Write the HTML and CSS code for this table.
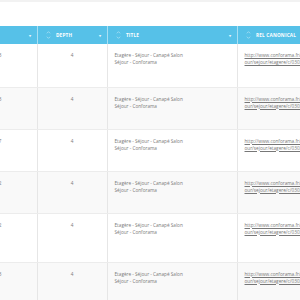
FILE: index.html
```html
<!DOCTYPE html>
<html lang="fr">
<head>
  <meta charset="UTF-8">
  <title>Audit SEO</title>
  <link rel="stylesheet" href="styles.css">
</head>
<body>
  <div class="topbar"></div>
  <div class="table-wrap">
    <table class="audit-table">
      <colgroup>
        <col class="col-id">
        <col class="col-depth">
        <col class="col-title">
        <col class="col-canonical">
      </colgroup>
      <thead>
        <tr>
          <th><span class="caret">&#9662;</span></th>
          <th>
            <span class="sort"><svg viewBox="0 0 6 12" width="5" height="10"><path d="M1 4 L3 2 L5 4 M1 8 L3 10 L5 8" fill="none" stroke="#bfe8f7" stroke-width="0.8"/></svg></span>
            <span class="label">Depth</span>
            <span class="caret">&#9662;</span>
          </th>
          <th>
            <span class="sort"><svg viewBox="0 0 6 12" width="5" height="10"><path d="M1 4 L3 2 L5 4 M1 8 L3 10 L5 8" fill="none" stroke="#bfe8f7" stroke-width="0.8"/></svg></span>
            <span class="label">Title</span>
            <span class="caret">&#9662;</span>
          </th>
          <th>
            <span class="sort"><svg viewBox="0 0 6 12" width="5" height="10"><path d="M1 4 L3 2 L5 4 M1 8 L3 10 L5 8" fill="none" stroke="#bfe8f7" stroke-width="0.8"/></svg></span>
            <span class="label">Rel canonical</span>
          </th>
        </tr>
      </thead>
      <tbody>
        <tr>
          <td class="num">3</td>
          <td class="depth">4</td>
          <td class="title">Etagère - Séjour - Canapé Salon Séjour - Conforama</td>
          <td><a href="#">http://www.conforama.fr/canape-salon-sejour/sejour/etagere/c/0303</a></td>
        </tr>
        <tr>
          <td class="num">3</td>
          <td class="depth">4</td>
          <td class="title">Etagère - Séjour - Canapé Salon Séjour - Conforama</td>
          <td><a href="#">http://www.conforama.fr/canape-salon-sejour/sejour/etagere/c/0303</a></td>
        </tr>
        <tr>
          <td class="num">7</td>
          <td class="depth">4</td>
          <td class="title">Etagère - Séjour - Canapé Salon Séjour - Conforama</td>
          <td><a href="#">http://www.conforama.fr/canape-salon-sejour/sejour/etagere/c/0303</a></td>
        </tr>
        <tr>
          <td class="num">2</td>
          <td class="depth">4</td>
          <td class="title">Etagère - Séjour - Canapé Salon Séjour - Conforama</td>
          <td><a href="#">http://www.conforama.fr/canape-salon-sejour/sejour/etagere/c/0303</a></td>
        </tr>
        <tr class="tall">
          <td class="num">2</td>
          <td class="depth">4</td>
          <td class="title">Etagère - Séjour - Canapé Salon Séjour - Conforama</td>
          <td><a href="#">http://www.conforama.fr/canape-salon-sejour/sejour/etagere/c/0303</a></td>
        </tr>
        <tr>
          <td class="num">3</td>
          <td class="depth">4</td>
          <td class="title">Etagère - Séjour - Canapé Salon Séjour - Conforama</td>
          <td><a href="#">http://www.conforama.fr/canape-salon-sejour/sejour/etagere/c/0303</a></td>
        </tr>
      </tbody>
    </table>
  </div>
</body>
</html>
```

FILE: styles.css
```css
body {
  margin: 0;
  background: #fff;
  font-family: 'Open Sans', 'Liberation Sans', sans-serif;
  color: #7a7a7a;
  overflow: hidden;
}
.topbar {
  height: 2px;
  background: #f2f2f2;
}
.table-wrap {
  margin-top: 24px;
  margin-left: -70px;
}
.audit-table {
  border-collapse: collapse;
  table-layout: fixed;
  width: 415px;
  font-size: 4.7px;
  line-height: 7px;
}
.col-id { width: 107px; }
.col-depth { width: 70px; }
.col-title { width: 130px; }
.col-canonical { width: 108px; }
.audit-table th {
  background: #56c1e8;
  color: #fff;
  height: 18px;
  padding: 0 6px 0 8px;
  text-align: left;
  font-weight: 700;
  text-transform: uppercase;
  letter-spacing: 0.2px;
  border-left: 1px solid #a8dff3;
  position: relative;
}
.audit-table th:first-child {
  border-left: none;
}
.sort {
  display: inline-block;
  vertical-align: middle;
  width: 5px;
  margin-right: 4px;
}
.sort svg {
  display: block;
}
.label {
  vertical-align: middle;
}
.caret {
  position: absolute;
  right: 5px;
  top: 6px;
  font-size: 4px;
  color: #e6f6fc;
}
.audit-table td {
  height: 42px;
  padding: 8px 7px 0 7px;
  vertical-align: top;
  border-left: 1px solid #e6e6e6;
  border-bottom: 1px solid #ececec;
  box-sizing: border-box;
}
.audit-table td:first-child {
  border-left: none;
}
.audit-table tbody tr:nth-child(even) td {
  background: #f9f9f9;
}
.audit-table tbody tr:first-child td {
  height: 43px;
}
.audit-table tr.tall td {
  height: 49px;
}
.audit-table td.title {
  padding-right: 42px;
}
.num {
  text-align: right;
  padding-right: 35px !important;
}
.depth {
  text-align: center;
}
.audit-table a {
  color: #777;
  text-decoration: underline;
  word-break: break-all;
}
```
